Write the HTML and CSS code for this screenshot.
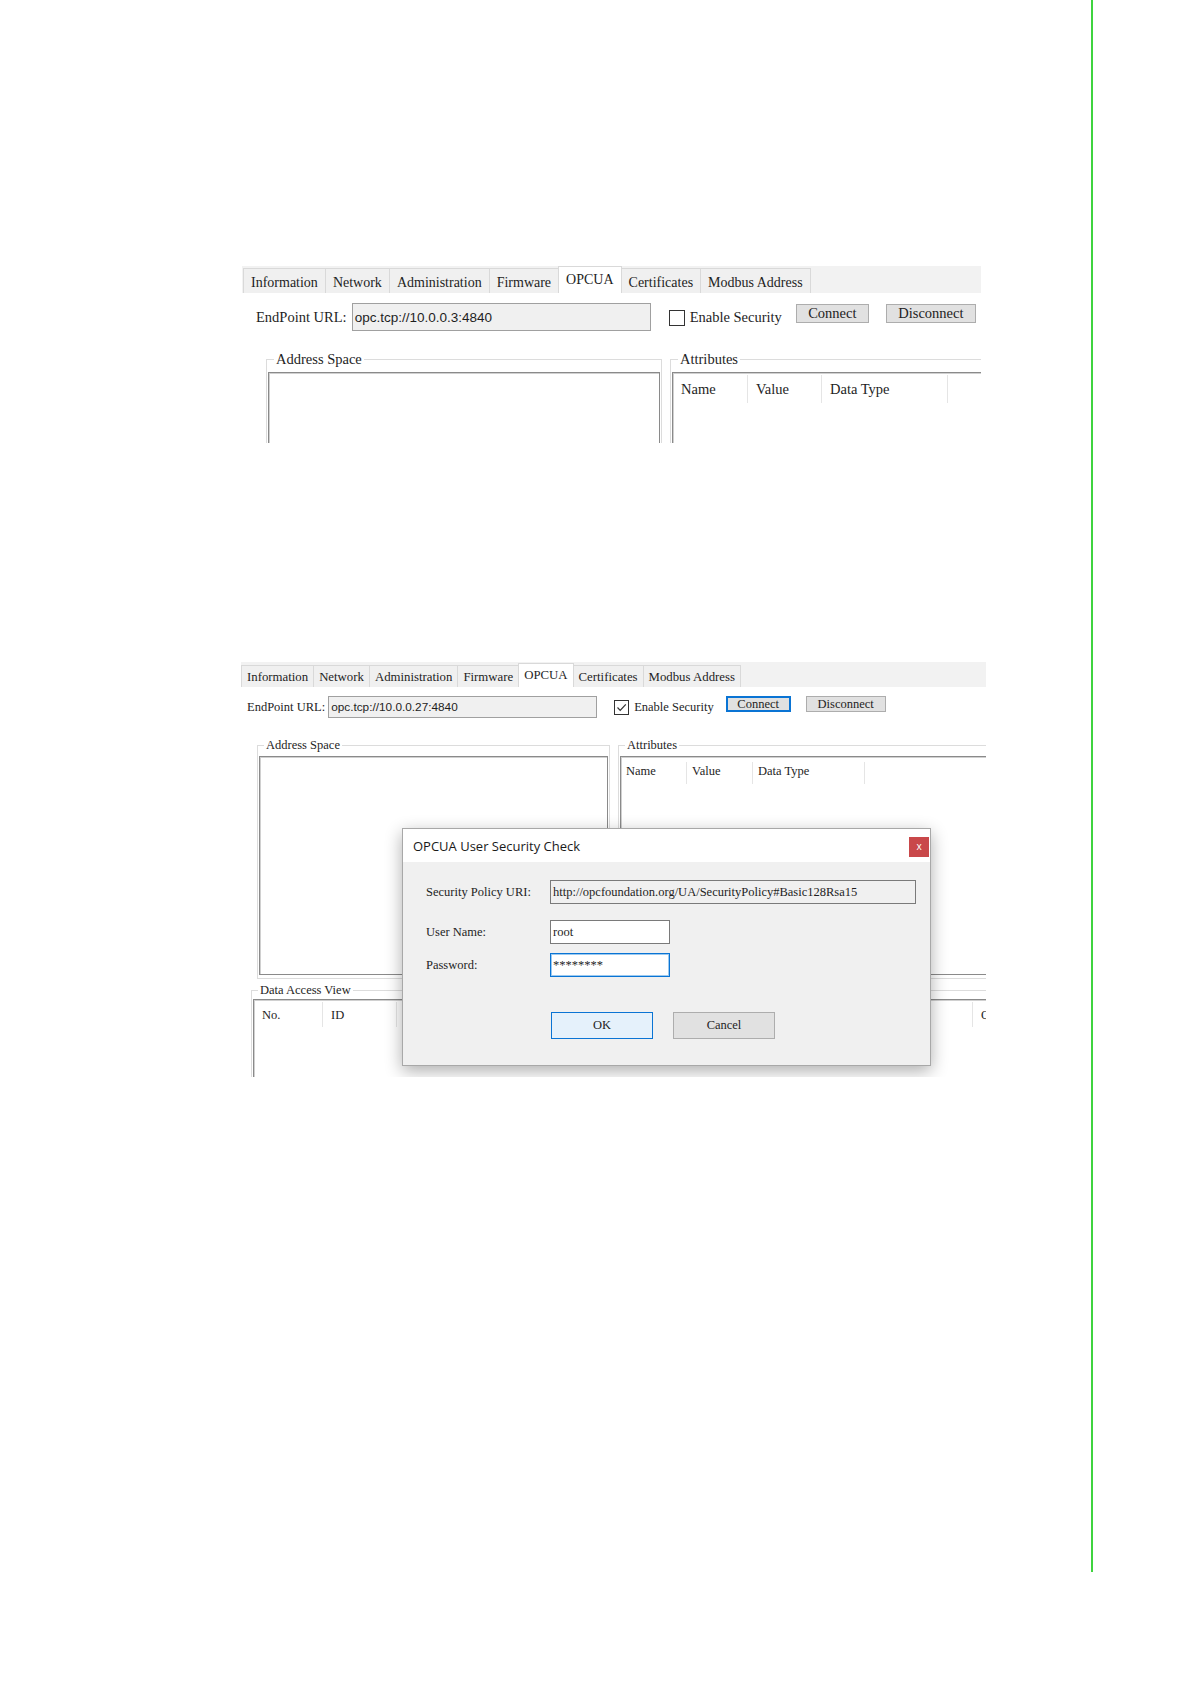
FILE: index.html
```html
<!DOCTYPE html>
<html lang="en">
<head>
    <meta charset="UTF-8">
    <meta name="viewport" content="width=device-width, initial-scale=1.0">
    <title>OPCUA Settings</title>
    <link rel="stylesheet" href="styles.css">
</head>
<body>
<div class="page">

    <!-- screenshot 1: OPCUA tab, security off -->
    <div class="shot shot-one">
        <div class="tabbar">
            <span class="tab">Information</span>
            <span class="tab">Network</span>
            <span class="tab">Administration</span>
            <span class="tab">Firmware</span>
            <span class="tab active">OPCUA</span>
            <span class="tab">Certificates</span>
            <span class="tab">Modbus Address</span>
        </div>
        <div class="endpoint">
            <span class="endpoint-label">EndPoint URL:</span>
            <span class="endpoint-input">opc.tcp://10.0.0.3:4840</span>
            <span class="check"></span>
            <span class="check-label">Enable Security</span>
            <span class="btn btn-connect">Connect</span>
            <span class="btn btn-disconnect">Disconnect</span>
        </div>
        <div class="groups">
            <fieldset class="group group-address">
                <legend>Address Space</legend>
                <div class="listbox"></div>
            </fieldset>
            <fieldset class="group group-attr">
                <legend>Attributes</legend>
                <div class="listbox">
                    <div class="list-head">
                        <span class="col col-name">Name</span>
                        <span class="col col-value">Value</span>
                        <span class="col col-type">Data Type</span>
                    </div>
                </div>
            </fieldset>
        </div>
    </div>

    <!-- screenshot 2: security enabled, login dialog -->
    <div class="shot shot-two">
        <div class="tabbar">
            <span class="tab">Information</span>
            <span class="tab">Network</span>
            <span class="tab">Administration</span>
            <span class="tab">Firmware</span>
            <span class="tab active">OPCUA</span>
            <span class="tab">Certificates</span>
            <span class="tab">Modbus Address</span>
        </div>
        <div class="endpoint">
            <span class="endpoint-label">EndPoint URL:</span>
            <span class="endpoint-input">opc.tcp://10.0.0.27:4840</span>
            <span class="check checked">
                <svg width="13" height="13" viewBox="0 0 13 13"><path d="M2.5 6.5 L5.2 9.3 L10.8 3.4" fill="none" stroke="#333" stroke-width="1.2"/></svg>
            </span>
            <span class="check-label">Enable Security</span>
            <span class="btn btn-connect focused">Connect</span>
            <span class="btn btn-disconnect">Disconnect</span>
        </div>
        <div class="groups">
            <fieldset class="group group-address">
                <legend>Address Space</legend>
                <div class="listbox"></div>
            </fieldset>
            <fieldset class="group group-attr">
                <legend>Attributes</legend>
                <div class="listbox">
                    <div class="list-head">
                        <span class="col col-name">Name</span>
                        <span class="col col-value">Value</span>
                        <span class="col col-type">Data Type</span>
                    </div>
                </div>
            </fieldset>
        </div>
        <fieldset class="group group-dav">
            <legend>Data Access View</legend>
            <div class="listbox">
                <div class="list-head">
                    <span class="col col-no">No.</span>
                    <span class="col col-id">ID</span>
                    <span class="col col-fill"></span>
                    <span class="col col-quality">Quality</span>
                </div>
            </div>
        </fieldset>

        <div class="dialog">
            <div class="dialog-title">
                <span>OPCUA User Security Check</span>
                <span class="dialog-close">x</span>
            </div>
            <div class="dialog-body">
                <div class="form-row row-policy">
                    <span class="form-label">Security Policy URI:</span>
                    <span class="field field-policy">http://opcfoundation.org/UA/SecurityPolicy#Basic128Rsa15</span>
                </div>
                <div class="form-row row-user">
                    <span class="form-label">User Name:</span>
                    <span class="field field-short">root</span>
                </div>
                <div class="form-row row-pass">
                    <span class="form-label">Password:</span>
                    <span class="field field-short field-focus">********</span>
                </div>
                <div class="dialog-actions">
                    <span class="dbtn dbtn-ok">OK</span>
                    <span class="dbtn dbtn-cancel">Cancel</span>
                </div>
            </div>
        </div>
    </div>

</div>
</body>
</html>
```

FILE: styles.css
```css
body {
    margin: 0;
    background: #fff;
    font-family: 'Liberation Serif', serif;
    color: #1e1e1e;
}
.page {
    width: 1091px;
    height: 1572px;
    border-right: 2px solid #3fd43f;
    overflow: hidden;
}
.shot {
    position: relative;
    overflow: hidden;
    background: #fff;
}
.shot-one {
    margin: 266px 0 0 242px;
    width: 739px;
    height: 177px;
    font-size: 14.5px;
}
.shot-two {
    margin: 219px 0 0 241px;
    width: 745px;
    height: 415px;
    font-size: 12.5px;
}

/* tabs */
.tabbar {
    display: flex;
    align-items: flex-end;
    background: #f2f2f2;
}
.tab {
    box-sizing: border-box;
    background: #f0f0f0;
    border: 1px solid #d9d9d9;
    border-bottom: none;
    margin-right: -1px;
    white-space: nowrap;
}
.tab.active {
    background: #fff;
    position: relative;
}
.shot-one .tabbar {
    height: 27px;
    padding-left: 1px;
}
.shot-one .tab {
    height: 25px;
    padding: 4px 7px 0;
    line-height: 20px;
    font-size: 14px;
}
.shot-one .tab.active {
    height: 27px;
    padding-top: 3px;
}
.shot-two .tabbar {
    height: 25px;
}
.shot-two .tab {
    height: 22px;
    padding: 3px 5px 0;
    line-height: 16px;
    font-size: 12.8px;
}
.shot-two .tab.active {
    height: 24px;
    padding-top: 3px;
}

/* endpoint row */
.endpoint {
    display: flex;
    align-items: center;
    white-space: nowrap;
}
.endpoint-input {
    box-sizing: border-box;
    display: flex;
    align-items: center;
    border: 1px solid #a0a0a0;
    background: #f0f0f0;
    font-family: 'Liberation Sans', sans-serif;
    padding-left: 2px;
}
.check {
    box-sizing: border-box;
    display: flex;
    align-items: center;
    justify-content: center;
    border: 1px solid #333;
    background: #fff;
}
.btn {
    box-sizing: border-box;
    align-self: flex-start;
    background: #e1e1e1;
    border: 1px solid #adadad;
    text-align: center;
}
.btn.focused {
    border: 2px solid #0a74d4;
}
.shot-one .endpoint {
    margin-top: 10px;
    height: 28px;
    padding-left: 14px;
}
.shot-one .endpoint-label {
    margin-right: 5px;
}
.shot-one .endpoint-input {
    width: 299px;
    height: 28px;
    font-size: 13.5px;
}
.shot-one .check {
    width: 16px;
    height: 16px;
    margin: 1px 5px 0 18px;
}
.shot-one .btn {
    height: 19px;
    line-height: 17px;
    margin-top: 1px;
}
.shot-one .btn-connect {
    width: 73px;
    margin-left: 14px;
}
.shot-one .btn-disconnect {
    width: 90px;
    margin-left: 17px;
}
.shot-two .endpoint {
    margin-top: 9px;
    height: 22px;
    padding-left: 6px;
}
.shot-two .endpoint-label {
    margin-right: 3px;
}
.shot-two .endpoint-input {
    width: 269px;
    height: 22px;
    font-size: 11.8px;
}
.shot-two .check {
    width: 15px;
    height: 15px;
    margin: 1px 5px 0 17px;
}
.shot-two .btn {
    height: 16px;
    line-height: 14px;
}
.shot-two .btn.focused {
    line-height: 12px;
}
.shot-two .btn-connect {
    width: 65px;
    margin-left: 12px;
}
.shot-two .btn-disconnect {
    width: 80px;
    margin-left: 15px;
}

/* group boxes */
.groups {
    display: flex;
}
.group {
    box-sizing: border-box;
    margin: 0;
    min-width: 0;
    flex-shrink: 0;
    border: 1px solid #dcdcdc;
    padding: 2px 1px 3px;
}
.group legend {
    padding: 0 2px;
}
.listbox {
    box-sizing: border-box;
    border: 1px solid #8a8a8a;
    box-shadow: inset 1px 1px 0 #d0d0d0;
    background: #fff;
}
.list-head {
    display: flex;
    white-space: nowrap;
}
.col {
    box-sizing: border-box;
    flex-shrink: 0;
    border-right: 1px solid #e5e5e5;
}
.shot-one .groups {
    margin-top: 20px;
    padding-left: 24px;
    gap: 8px;
}
.shot-one .group {
    padding-top: 5px;
}
.shot-one .group legend {
    margin-left: 6px;
    line-height: 16px;
}
.shot-one .group-address {
    width: 396px;
    height: 150px;
}
.shot-one .group-attr {
    width: 340px;
    height: 150px;
}
.shot-one .listbox {
    height: 120px;
}
.shot-one .list-head {
    margin-top: 2px;
    height: 28px;
    line-height: 28px;
}
.shot-one .col {
    padding-left: 8px;
}
.shot-one .col-name { width: 75px; }
.shot-one .col-value { width: 74px; }
.shot-one .col-type { width: 126px; }

.shot-two .groups {
    margin-top: 20px;
    padding-left: 16px;
    gap: 8px;
}
.shot-two .groups .group {
    padding-top: 4px;
}
.shot-two .group legend {
    margin-left: 5px;
    line-height: 14px;
}
.shot-two .group-address {
    width: 353px;
}
.shot-two .group-attr {
    width: 380px;
}
.shot-two .groups .listbox {
    height: 219px;
}
.shot-two .group-dav {
    margin: 4px 0 0 10px;
    width: 770px;
}
.shot-two .group-dav .listbox {
    height: 120px;
}
.shot-two .list-head {
    margin-top: 5px;
    height: 22px;
    line-height: 18px;
}
.shot-two .col {
    padding-left: 5px;
}
.shot-two .col-name { width: 66px; }
.shot-two .col-value { width: 66px; }
.shot-two .col-type { width: 112px; }
.shot-two .group-dav .list-head {
    margin-top: 2px;
    height: 25px;
    line-height: 26px;
}
.shot-two .group-dav .col {
    padding-left: 8px;
}
.shot-two .col-no { width: 69px; }
.shot-two .col-id { width: 74px; }
.shot-two .col-fill { width: 576px; }
.shot-two .col-quality { width: 80px; padding-left: 5px; }

/* login dialog, over the window */
.dialog {
    position: absolute;
    left: 161px;
    top: 166px;
    width: 529px;
    height: 238px;
    box-sizing: border-box;
    border: 1px solid #a8a8a8;
    background: #f0f0f0;
    box-shadow: 0 5px 16px rgba(0, 0, 0, 0.32);
    font-size: 12.5px;
}
.dialog-title {
    display: flex;
    align-items: center;
    height: 33px;
    padding-left: 10px;
    background: #fff;
    font-family: 'Open Sans', sans-serif;
    font-size: 13px;
    color: #1a1a1a;
}
.dialog-close {
    align-self: flex-start;
    margin: 8px 1px 0 auto;
    width: 20px;
    height: 20px;
    background: #c9484a;
    color: #fff;
    font-size: 10px;
    line-height: 18px;
    text-align: center;
}
.dialog-body {
    padding: 18px 0 0 23px;
}
.form-row {
    display: flex;
    align-items: center;
    white-space: nowrap;
}
.form-label {
    width: 124px;
}
.field {
    box-sizing: border-box;
    height: 24px;
    line-height: 22px;
    padding-left: 2px;
    border: 1px solid #7a7a7a;
    background: #fff;
}
.field-policy {
    width: 366px;
    background: #f0f0f0;
}
.field-short {
    width: 120px;
}
.field-focus {
    border-color: #0a74d4;
    box-shadow: inset 0 0 0 1px #9ccaf0;
}
.row-user {
    margin-top: 16px;
}
.row-pass {
    margin-top: 9px;
}
.dialog-actions {
    display: flex;
    gap: 20px;
    margin-top: 35px;
    padding-left: 125px;
}
.dbtn {
    box-sizing: border-box;
    width: 102px;
    height: 27px;
    line-height: 25px;
    text-align: center;
    border: 1px solid #adadad;
    background: #e1e1e1;
}
.dbtn-ok {
    border-color: #0a74d4;
    background: #e5f1fb;
}
```
